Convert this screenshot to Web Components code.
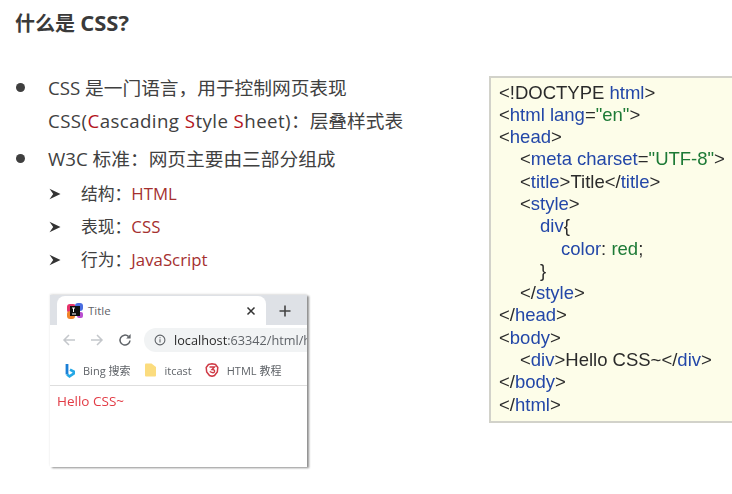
<!DOCTYPE html>
<html lang="zh">
<head>
<meta charset="utf-8">
<title>什么是 CSS?</title>
<style>
html,body{margin:0;padding:0;background:#fff}
body{width:732px;height:494px;overflow:hidden;font-family:"Open Sans","Noto Sans CJK SC",sans-serif;color:#404040}
</style>
</head>
<body>
<css-slide>
  <slide-title slot="title">什么是 <t->CSS?</t-></slide-title>
  <bullet-item slot="left">CSS 是一门语言，用于控制网页表现<br><w->CSS(<r->C</r->ascading <r->S</r->tyle <r->S</r->heet)</w->：层叠样式表</bullet-item>
  <bullet-item slot="left" class="second">W3C 标准：网页主要由三部分组成</bullet-item>
  <sub-item slot="left" class="first">结构：<v->HTML</v-></sub-item>
  <sub-item slot="left">表现：<v->CSS</v-></sub-item>
  <sub-item slot="left">行为：<v->JavaScript</v-></sub-item>
  <browser-shot slot="left"></browser-shot>
  <code-box slot="right">
    <code-line>&lt;!DOCTYPE <k->html</k->&gt;</code-line>
    <code-line>&lt;<k->html lang</k->=<s->"en"</s->&gt;</code-line>
    <code-line>&lt;<k->head</k->&gt;</code-line>
    <code-line class="i1">&lt;<k->meta charset</k->=<s->"UTF-8"</s->&gt;</code-line>
    <code-line class="i1">&lt;<k->title</k->&gt;Title&lt;/<k->title</k->&gt;</code-line>
    <code-line class="i1">&lt;<k->style</k->&gt;</code-line>
    <code-line class="i2"><k->div</k->{</code-line>
    <code-line class="i3"><k->color</k->: <s->red</s->;</code-line>
    <code-line class="i2">}</code-line>
    <code-line class="i1">&lt;/<k->style</k->&gt;</code-line>
    <code-line>&lt;/<k->head</k->&gt;</code-line>
    <code-line>&lt;<k->body</k->&gt;</code-line>
    <code-line class="i1">&lt;<k->div</k->&gt;Hello CSS~&lt;/<k->div</k->&gt;</code-line>
    <code-line>&lt;/<k->body</k->&gt;</code-line>
    <code-line>&lt;/<k->html</k->&gt;</code-line>
  </code-box>
</css-slide>
<script>
function def(name, html){
  customElements.define(name, class extends HTMLElement{
    constructor(){super();this.attachShadow({mode:'open'}).innerHTML=html;}
  });
}
def('css-slide',`<style>
:host{display:block;width:732px;height:494px;box-sizing:border-box;padding:8px 0 0 15px}
.cols{display:grid;grid-template-columns:475px 242px;margin-top:35px}
.r{padding-top:5px}
</style>
<slot name="title"></slot>
<div class="cols"><div><slot name="left"></slot></div><div class="r"><slot name="right"></slot></div></div>`);
def('slide-title',`<style>:host{display:block;font:700 20px/28px "Open Sans","Noto Sans CJK SC",sans-serif;color:#3a3a3a;height:28px}</style><slot></slot>`);
def('t-',`<style>:host{display:inline;font-size:22px}</style><slot></slot>`);
def('w-',`<style>:host{display:inline;letter-spacing:.42px}</style><slot></slot>`);
def('r-',`<style>:host{display:inline;color:#b3141c}</style><slot></slot>`);
def('v-',`<style>:host{display:inline;color:#a5302f}</style><slot></slot>`);
def('k-',`<style>:host{display:inline;color:#2347a8}</style><slot></slot>`);
def('s-',`<style>:host{display:inline;color:#1d7a36}</style><slot></slot>`);
def('bullet-item',`<style>
:host{display:flex;font:400 18.700px/33px "Open Sans","Noto Sans CJK SC",sans-serif;color:#404040}
:host(.second){margin-top:5px}
.dot{flex:none;width:33px;box-sizing:border-box;padding-left:1px}
.dot i{display:block;width:9px;height:9px;border-radius:50%;background:#3f3f3f;margin-top:12px}
</style><div class="dot"><i></i></div><div><slot></slot></div>`);
def('sub-item',`<style>
:host{display:flex;align-items:center;height:33px;font:400 16.800px/33px "Open Sans","Noto Sans CJK SC",sans-serif;color:#404040;padding-left:34px}
:host(.first){margin-top:2px}
svg{flex:none;width:12px;height:12px;margin-right:20px}
</style><svg viewBox="0 0 12 12"><path d="M.5 .8 11.500 6 .5 11.200 4.200 6Z" fill="#333"/></svg><span><slot></slot></span>`);
def('browser-shot',`<style>
:host{display:block;width:257px;height:172px;margin:19px 0 0 35px;background:#fff;box-shadow:2px 1px 2px #8e8e8e,0 -1px 2px #e4e4e4;font-family:"Open Sans","Noto Sans CJK SC",sans-serif;overflow:hidden;filter:blur(.6px)}
.strip{display:flex;height:30px;background:#dee1e6;align-items:stretch;padding:1px 0 0 7px;box-sizing:border-box}
.tab{width:209px;background:#fff;border-radius:8px 8px 0 0;display:flex;align-items:center;padding:0 10px;box-sizing:border-box;font-size:11.500px;color:#5f6368}
.tab span{flex:1;margin-left:5px}
.plus{flex:1;display:flex;align-items:center;padding-left:13px}
.bar{display:flex;align-items:center;height:30px;padding-left:12px;box-sizing:border-box}
.bar svg{flex:none}
.omni{flex:1;min-width:0;height:24px;margin-left:12px;background:#f1f3f4;border-radius:12px 0 0 12px;display:flex;align-items:center;padding-left:10px;font-size:12.700px;color:#5f6368;white-space:nowrap;overflow:hidden}
.omni svg{margin-right:8px}
.omni b{font-weight:400;color:#2b2b2b}
.marks{display:flex;align-items:center;height:31px;border-bottom:1px solid #dedede;padding-left:15px;font-size:11px;color:#5f6368;box-sizing:border-box}
.marks svg{flex:none;margin-right:8px}
.marks span{margin-right:15px;white-space:nowrap}
.marks span.it{margin-right:13px}
.page{padding:6px 0 0 7px;font-size:13.500px;line-height:18px;color:#e23b45}
</style>
<div class="strip"><div class="tab">
<svg width="16" height="16" viewBox="0 0 16 16"><rect x="0" y="1" width="9" height="9" rx="3" fill="#e6336b"/><rect x="8" y="0" width="8" height="8" rx="3" fill="#4a6de0"/><rect x="0" y="8" width="8" height="8" rx="3" fill="#f0842a"/><rect x="10" y="9" width="6" height="6" rx="2" fill="#b94fd0"/><rect x="3" y="3" width="10" height="10" fill="#111"/><path d="M5 5h3M6.500 5v4M5 11h4" stroke="#fff" stroke-width="1"/></svg>
<span>Title</span>
<svg width="10" height="10" viewBox="0 0 10 10"><path d="M1.500 1.500l7 7M8.500 1.500l-7 7" stroke="#333" stroke-width="1.500"/></svg></div>
<div class="plus"><svg width="12" height="12" viewBox="0 0 12 12"><path d="M6 .5v11M.5 6h11" stroke="#444" stroke-width="1.600"/></svg></div></div>
<div class="bar">
<svg width="14" height="14" viewBox="0 0 14 14" style="margin-right:14px"><path d="M13 7H2M7 2 2 7l5 5" fill="none" stroke="#c4c7cb" stroke-width="1.500"/></svg>
<svg width="14" height="14" viewBox="0 0 14 14" style="margin-right:14px"><path d="M1 7h11M7 2l5 5-5 5" fill="none" stroke="#c4c7cb" stroke-width="1.500"/></svg>
<svg width="14" height="14" viewBox="0 0 14 14"><path d="M12 7.500A5 5 0 1 1 10.400 3.400" fill="none" stroke="#5f6368" stroke-width="1.500"/><path d="M12.600 1v4.400H8.200Z" fill="#5f6368"/></svg>
<div class="omni"><svg width="12" height="12" viewBox="0 0 12 12"><circle cx="6" cy="6" r="4.900" fill="none" stroke="#5f6368" stroke-width="1.100"/><path d="M6 5.200v3.300M6 3.200v1.100" stroke="#5f6368" stroke-width="1.100"/></svg><b>localhost</b>:63342/html/h</div>
</div>
<div class="marks">
<svg width="10" height="15" viewBox="0 0 10 15"><path d="M2 1v10.500" fill="none" stroke="#1b7fd6" stroke-width="2.800"/><path d="M2 11.500 4.500 13.300 8.700 10.500V8.500L5 6.600" fill="none" stroke="#25a8e6" stroke-width="2.600"/></svg><span>Bing 搜索</span>
<svg width="11" height="14" viewBox="0 0 11 14"><path d="M0 1.500Q0 .5 1 .5h5.500L11 4v8.500q0 1-1 1H1q-1 0-1-1Z" fill="#fbdc7e"/></svg><span class="it">itcast</span>
<svg width="14" height="14" viewBox="0 0 14 14"><path d="M3.500 1.500 7 .8l3.500.7 2.300 3-.5 4.500L9.500 12.500 7 13.300 4.500 12.500 1.700 9 1.200 4.500Z" fill="none" stroke="#cf3a45" stroke-width="1.500"/><path d="M4.500 4h5L7 6.500q3 0 2.500 2.200T4.700 8.500" fill="none" stroke="#cf3a45" stroke-width="1.400"/></svg><span>HTML 教程</span>
</div>
<div class="page">Hello CSS~</div>`);
def('code-box',`<style>
:host{display:block;width:243px;height:347px;box-sizing:border-box;margin-left:-1px;background:#fdfde9;border:2px solid #d2d2ca;border-right:0;padding:3.500px 0 0 8px;font:400 18.500px/22.300px "Liberation Sans",Arial,sans-serif;color:#2b2b2b;filter:blur(.25px);overflow:hidden}
</style><slot></slot>`);
def('code-line',`<style>
:host{display:block;height:22.300px;white-space:nowrap}
:host(.i1){padding-left:21px}
:host(.i2){padding-left:41px}
:host(.i3){padding-left:62px}
</style><slot></slot>`);
</script>
</body>
</html>
